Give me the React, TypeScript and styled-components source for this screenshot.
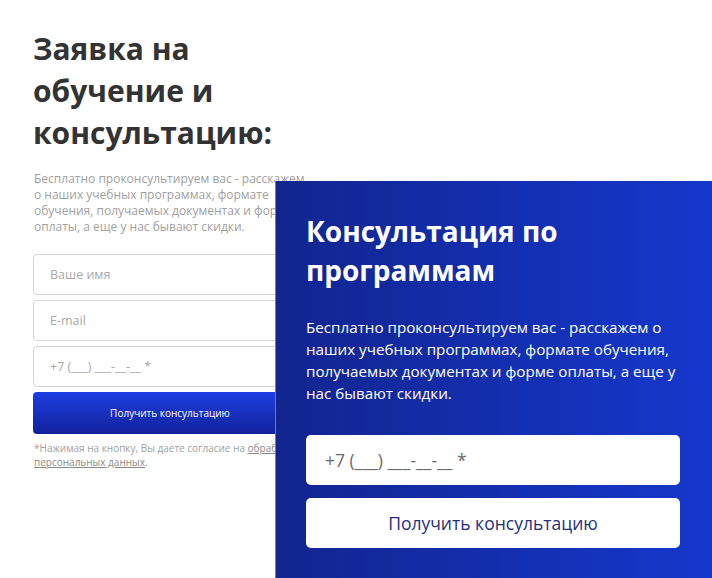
import styled, { createGlobalStyle } from "styled-components";

const GlobalStyle = createGlobalStyle`
  html, body {
    margin: 0;
    padding: 0;
    background: #fff;
  }
  body {
    font-family: "Open Sans", "Noto Sans", sans-serif;
    -webkit-font-smoothing: antialiased;
  }
  * {
    box-sizing: border-box;
  }
`;

const Page = styled.div`
  position: relative;
  width: 712px;
  height: 578px;
  overflow: hidden;
  background: #fff;
`;

/* левая форма (страница за попапом) */
const RequestForm = styled.form`
  width: 307px;
  padding: 28px 0 0 33px;
  display: flex;
  flex-direction: column;
`;

const Title = styled.h1`
  margin: 0;
  font-size: 30px;
  line-height: 42px;
  font-weight: 700;
  color: #333333;
`;

const Lead = styled.p`
  margin: 17px 0 0 1px;
  font-size: 12px;
  line-height: 16px;
  color: #a0a0a0;
`;

const Fields = styled.div`
  margin-top: 19px;
  display: flex;
  flex-direction: column;
  gap: 5px;
`;

const Field = styled.input`
  height: 41px;
  width: 100%;
  padding: 0 16px;
  border: 1px solid #d4d4d4;
  border-radius: 4px;
  background: #fff;
  font-family: inherit;
  font-size: 12.5px;
  color: #333;
  outline: none;

  &::placeholder {
    color: #a8a8a8;
  }
`;

const SubmitButton = styled.button`
  height: 42px;
  width: 100%;
  border: none;
  border-radius: 4px;
  background: linear-gradient(180deg, #1c3fe2 0%, #12219a 100%);
  color: #fff;
  font-family: inherit;
  font-size: 10px;
  font-weight: 500;
  cursor: pointer;
`;

const Consent = styled.p`
  margin: 7px 0 0 1px;
  font-size: 10px;
  line-height: 14px;
  color: #a0a0a0;

  a {
    color: #8a8a8a;
    text-decoration: underline;
  }
`;

/* синий попап поверх страницы */
const Popup = styled.div`
  position: absolute;
  left: 275px;
  top: 181px;
  right: 0;
  bottom: 0;
  padding: 31px 32px 0 30px;
  border-left: 1px solid rgba(150, 165, 230, 0.6);
  background: linear-gradient(90deg, #12258f 0%, #1538cc 100%);
  display: flex;
  flex-direction: column;
`;

const PopupTitle = styled.h2`
  margin: 0;
  font-size: 28px;
  line-height: 39px;
  font-weight: 700;
  color: #fff;
`;

const PopupText = styled.p`
  margin: 26px 0 0;
  font-size: 15.2px;
  line-height: 22px;
  color: #fff;
`;

const PopupForm = styled.form`
  margin-top: 31px;
  display: flex;
  flex-direction: column;
  gap: 13px;
`;

const PopupField = styled.input`
  height: 50px;
  width: 100%;
  padding: 0 19px;
  border: none;
  border-radius: 5px;
  background: #fff;
  font-family: inherit;
  font-size: 17.5px;
  color: #333;
  outline: none;

  &::placeholder {
    color: #6a6a6a;
  }
`;

const PopupButton = styled.button`
  height: 50px;
  width: 100%;
  border: none;
  border-radius: 5px;
  background: #fff;
  color: #25307c;
  font-family: inherit;
  font-size: 17.5px;
  cursor: pointer;
`;

const App = () => {
  return (
    <Page>
      <GlobalStyle />
      <RequestForm onSubmit={(e) => e.preventDefault()}>
        <Title>
          Заявка на
          <br />
          обучение и
          <br />
          консультацию:
        </Title>
        <Lead>
          Бесплатно проконсультируем вас - расскажем о наших учебных
          программах, формате обучения, получаемых документах и форме оплаты, а
          еще у нас бывают скидки.
        </Lead>
        <Fields>
          <Field type="text" placeholder="Ваше имя" />
          <Field type="email" placeholder="E-mail" />
          <Field type="tel" placeholder="+7 (___) ___-__-__ *" />
          <SubmitButton type="submit">Получить консультацию</SubmitButton>
        </Fields>
        <Consent>
          *Нажимая на кнопку, Вы даете согласие на{" "}
          <a href="#">обработку персональных данных</a>.
        </Consent>
      </RequestForm>

      <Popup>
        <PopupTitle>
          Консультация по
          <br />
          программам
        </PopupTitle>
        <PopupText>
          Бесплатно проконсультируем вас - расскажем о наших учебных
          программах, формате обучения, получаемых документах и форме оплаты, а
          еще у нас бывают скидки.
        </PopupText>
        <PopupForm onSubmit={(e) => e.preventDefault()}>
          <PopupField type="tel" placeholder="+7 (___) ___-__-__ *" />
          <PopupButton type="submit">Получить консультацию</PopupButton>
        </PopupForm>
      </Popup>
    </Page>
  );
};

export default App;
